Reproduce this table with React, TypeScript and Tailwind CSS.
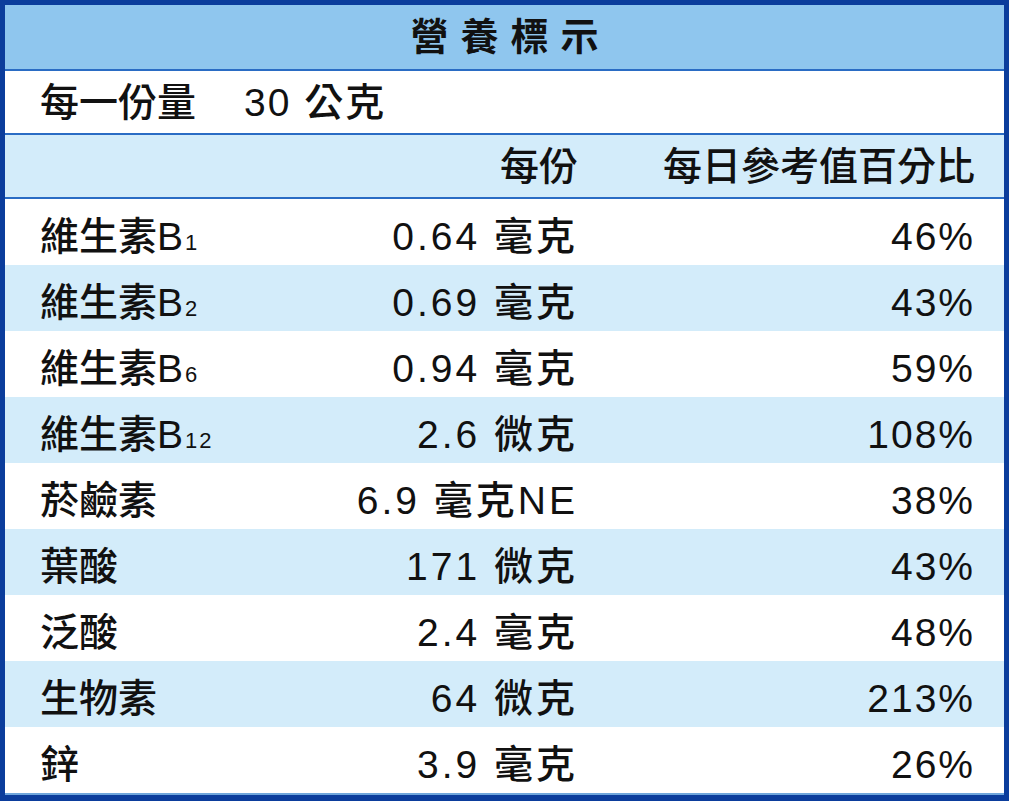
const rows = [
  { name: "維生素B", sub: "1", amount: "0.64 毫克", pct: "46%" },
  { name: "維生素B", sub: "2", amount: "0.69 毫克", pct: "43%" },
  { name: "維生素B", sub: "6", amount: "0.94 毫克", pct: "59%" },
  { name: "維生素B", sub: "12", amount: "2.6 微克", pct: "108%" },
  { name: "菸鹼素", sub: "", amount: "6.9 毫克NE", pct: "38%" },
  { name: "葉酸", sub: "", amount: "171 微克", pct: "43%" },
  { name: "泛酸", sub: "", amount: "2.4 毫克", pct: "48%" },
  { name: "生物素", sub: "", amount: "64 微克", pct: "213%" },
  { name: "鋅", sub: "", amount: "3.9 毫克", pct: "26%" },
];

const font = { fontFamily: '"Liberation Sans", "Noto Sans CJK TC", sans-serif' };

export default function App() {
  return (
    <main className="min-h-screen bg-white" style={font}>
      <div className="flex w-[1009px] flex-col border-[5px] border-b-[6px] border-[#0b3d9c] text-[39px] leading-none text-[#111]">
        <div className="flex h-[66px] items-center justify-center border-b-2 border-[#2a6cc4] bg-[#8fc6ee] pl-[12px] text-[38px] font-bold tracking-[12px]">
          營養標示
        </div>

        <div className="flex h-[64px] items-center border-b-2 border-[#2a6cc4] bg-white pl-[35px] font-medium">
          <span>每一份量</span>
          <span className="ml-[48px] tracking-[2px]">30 公克</span>
        </div>

        <div className="grid h-[64px] grid-cols-[299px_274px_1fr] items-center border-b-2 border-[#2a6cc4] bg-[#d3ecfa] font-medium">
          <span />
          <span className="text-right">每份</span>
          <span className="pr-[29px] text-right">每日參考值百分比</span>
        </div>

        <div className="flex flex-col border-b-2 border-[#6fa6dc]">
          {rows.map((r, i) => (
            <div
              key={i}
              className={`grid h-[66px] grid-cols-[299px_274px_1fr] items-center ${
                i % 2 === 1 ? "bg-[#d3ecfa]" : "bg-white"
              }`}
            >
              <span className="pl-[35px] pt-[8px] font-medium">
                {r.name}
                {r.sub && (
                  <span className="ml-[2px] text-[22px] font-normal tracking-[2px]">{r.sub}</span>
                )}
              </span>
              <span className="pt-[8px] text-right font-medium tracking-[3px]">{r.amount}</span>
              <span className="pr-[29px] pt-[8px] text-right tracking-[2px]">{r.pct}</span>
            </div>
          ))}
        </div>
      </div>
    </main>
  );
}
